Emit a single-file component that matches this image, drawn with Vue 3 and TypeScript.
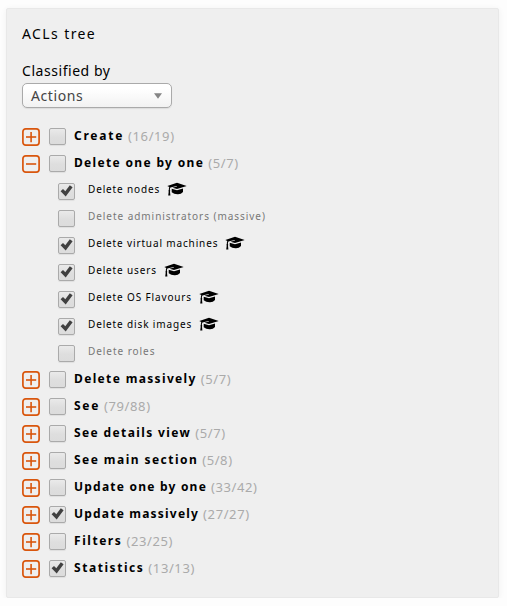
<script setup lang="ts">
interface Acl {
  label: string
  checked: boolean
  limited: boolean
}
interface Group {
  label: string
  count: string
  tracking: number
  checked: boolean
  children?: Acl[]
}

const groups: Group[] = [
  { label: 'Create', count: '(16/19)', tracking: 1.75, checked: false },
  {
    label: 'Delete one by one',
    count: '(5/7)',
    tracking: 1.33,
    checked: false,
    children: [
      { label: 'Delete nodes', checked: true, limited: true },
      { label: 'Delete administrators (massive)', checked: false, limited: false },
      { label: 'Delete virtual machines', checked: true, limited: true },
      { label: 'Delete users', checked: true, limited: true },
      { label: 'Delete OS Flavours', checked: true, limited: true },
      { label: 'Delete disk images', checked: true, limited: true },
      { label: 'Delete roles', checked: false, limited: false },
    ],
  },
  { label: 'Delete massively', count: '(5/7)', tracking: 1.35, checked: false },
  { label: 'See', count: '(79/88)', tracking: 1.7, checked: false },
  { label: 'See details view', count: '(5/7)', tracking: 1.38, checked: false },
  { label: 'See main section', count: '(5/8)', tracking: 1.45, checked: false },
  { label: 'Update one by one', count: '(33/42)', tracking: 1.22, checked: false },
  { label: 'Update massively', count: '(27/27)', tracking: 1.2, checked: true },
  { label: 'Filters', count: '(23/25)', tracking: 1.55, checked: false },
  { label: 'Statistics', count: '(13/13)', tracking: 1.55, checked: true },
]
</script>

<template>
  <main class="panel">
    <h1 class="title">ACLs tree</h1>
    <div class="caption">Classified by</div>
    <div class="select">
      <span>Actions</span>
      <svg class="arrow" width="8" height="6" viewBox="0 0 8 6"><path d="M0 0.3H8L4 5.8Z" fill="#858585" /></svg>
    </div>
    <ul class="tree">
      <li v-for="group in groups" :key="group.label">
        <div class="row">
          <svg class="toggle" width="19" height="19" viewBox="0 0 19 19" fill="none" stroke="#d9560d">
            <rect x="0.9" y="0.9" width="16.2" height="16.2" rx="2.8" stroke-width="1.7" />
            <path d="M4 9H14.2" stroke-width="1.6" />
            <path v-if="!group.children" d="M9.1 3.9V14.2" stroke-width="1.6" />
          </svg>
          <span class="check">
            <svg v-if="group.checked" class="mark" width="13" height="12" viewBox="0 0 13 12"><path d="M0.6 6.3L3 3.9L5.3 6.3L9.8 0.2L12.6 2.2L5.7 11.4Z" fill="#404040" /></svg>
          </span>
          <span class="name" :style="{ letterSpacing: group.tracking + 'px' }">{{ group.label }}</span>
          <span class="count">{{ group.count }}</span>
        </div>
        <ul v-if="group.children" class="children">
          <li v-for="acl in group.children" :key="acl.label" class="row child" :class="{ off: !acl.checked }">
            <span class="check">
              <svg v-if="acl.checked" class="mark" width="13" height="12" viewBox="0 0 13 12"><path d="M0.6 6.3L3 3.9L5.3 6.3L9.8 0.2L12.6 2.2L5.7 11.4Z" fill="#404040" /></svg>
            </span>
            <span class="acl-name">{{ acl.label }}</span>
            <svg v-if="acl.limited" class="cap" width="20" height="14" viewBox="0 0 20 14">
              <path d="M0.3 4.1L10 0.7L19.7 4.1L10 7.1L5.5 5.7L10 4.6L9.8 4L3.4 5.4Q2.8 6.5 2.9 8.1Q3.6 8.8 3 9.7L3.4 13.4H1.2L1.7 9.7Q1.1 8.8 1.8 8Q1.8 6.1 2.3 5.1Z" />
              <path d="M4.7 6.8L10 8.2L16 6.6V10Q14 12.4 10.5 12.2Q7 12.1 4.7 10.2Z" />
            </svg>
          </li>
        </ul>
      </li>
    </ul>
  </main>
</template>

<style>
body {
  margin: 0;
  background: #fdfdfd;
}
</style>

<style scoped>
.panel {
  box-sizing: border-box;
  width: 493px;
  height: 590px;
  margin: 8px 0 0 6px;
  padding: 15px 15px 0;
  border: 1px solid #e8e8e8;
  border-radius: 2px;
  background: #efefef;
  box-shadow: 0 1px 6px rgba(0, 0, 0, 0.06);
  font-family: "Noto Sans", "Open Sans", sans-serif;
  letter-spacing: 1px;
  color: #000;
  white-space: nowrap;
}
.title,
.caption {
  margin: 0;
  font-size: 14px;
  font-weight: 400;
  line-height: 20px;
}
.title {
  letter-spacing: 1.4px;
}
.caption {
  margin-top: 17px;
  letter-spacing: 0.55px;
}
.select {
  display: flex;
  align-items: center;
  justify-content: space-between;
  box-sizing: border-box;
  width: 150px;
  height: 25px;
  margin-top: 2px;
  padding: 0 9px 0 8px;
  border: 1px solid #aaa;
  border-radius: 5px;
  background: linear-gradient(#fff 20%, #f2f2f2);
  box-shadow: 0 1px 1px rgba(0, 0, 0, 0.08);
  color: #444;
  font-size: 14px;
  letter-spacing: 0.6px;
}
.tree,
.children {
  margin: 0;
  padding: 0;
  list-style: none;
}
.tree {
  margin-top: 15px;
}
.row {
  display: flex;
  align-items: center;
  height: 27px;
}
.toggle {
  margin: 2px 8px 0 0;
}
.check {
  display: flex;
  align-items: center;
  justify-content: center;
  box-sizing: border-box;
  flex: none;
  width: 17px;
  height: 17px;
  border: 1px solid #aaa;
  border-radius: 2px;
  background: linear-gradient(#eaeaea, #dedede 55%, #dcdcdc);
  box-shadow: 0 1px 1px rgba(0, 0, 0, 0.07);
}
.mark {
  margin-bottom: 1px;
}
.name {
  margin: -2px 0 0 8px;
  font-size: 12px;
  font-weight: 700;
}
.count {
  margin: -2px 0 0 4px;
  font-size: 13px;
  letter-spacing: 0.6px;
  color: #aaa;
}
.children {
  padding-left: 36px;
}
.child .check {
  margin-top: 2px;
}
.acl-name {
  margin: -3px 0 0 13px;
  font-size: 10px;
  letter-spacing: 0.86px;
}
.off .acl-name {
  color: #777;
  letter-spacing: 0.95px;
}
.cap {
  margin: -3px 0 0 7px;
}
</style>
